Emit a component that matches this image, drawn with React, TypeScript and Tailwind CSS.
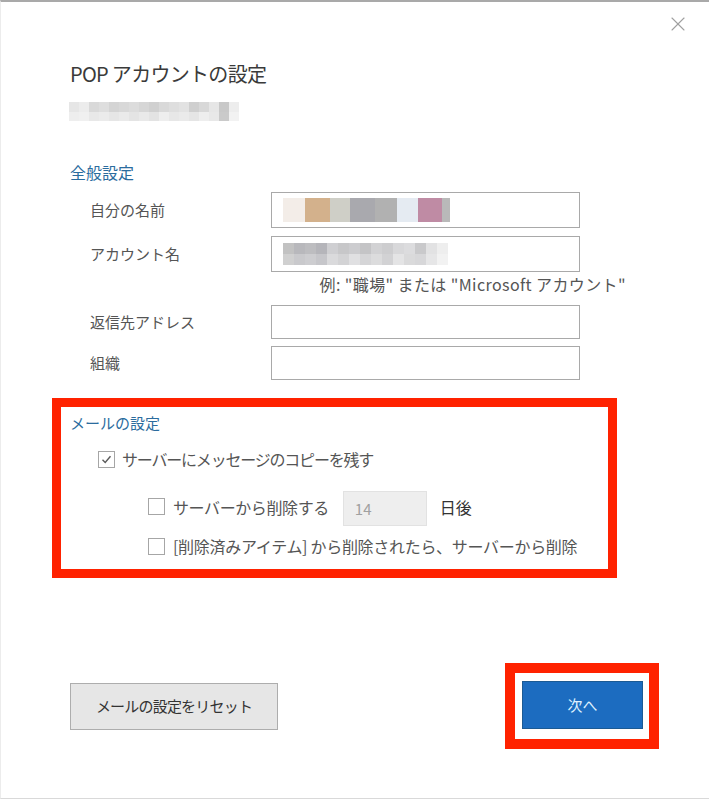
import { X } from 'lucide-react';

const emailTop = ['#e6e6e6', '#ececec', '#d9d9d9', '#dedede', '#d4d4d4', '#d8d8d8', '#dcdcdc', '#d6d6d6', '#d0d0d0', '#d9d9d9', '#dedede', '#e2e2e2', '#cfcfcf', '#d8d8d8', '#e6e6e6', '#c8c8c8', '#ededed'];
const emailBottom = ['#eeeeee', '#f0f0f0', '#e8e8e8', '#ebebeb', '#e6e6e6', '#eaeaea', '#e4e4e4', '#e9e9e9', '#e3e3e3', '#eeeeee', '#e7e7e7', '#eaeaea', '#e5e5e5', '#eeeeee', '#e8e8e8', '#cacaca', '#f2f2f2'];

const nameBlur = [
  { w: 22, c: '#f3ede8' },
  { w: 25, c: '#d3b18c' },
  { w: 20, c: '#cfcfc7' },
  { w: 25, c: '#a9a9ae' },
  { w: 22, c: '#b1b1b1' },
  { w: 21, c: '#e5ebf2' },
  { w: 24, c: '#bf8ba4' },
  { w: 8, c: '#b9b9b9' },
];

const accTop = ['#c2c2c2', '#b8b8bc', '#bdbdc0', '#b5b5ba', '#cfcfd2', '#c7c7c9', '#cccccf', '#c4c4c6', '#d2d2d4', '#cdcdcf', '#d8d8da', '#dcdcde', '#c9c9cb', '#e2e2e3', '#eeeeee'];
const accBottom = ['#d0d0d0', '#c9c9cc', '#cdcdd0', '#c6c6ca', '#dadadc', '#d3d3d5', '#e0e0e2', '#d5d5d7', '#dcdcdd', '#d2d2d4', '#e4e4e5', '#dadadb', '#d7d7d9', '#e6e6e7', '#f2f2f2'];

function Checkbox({ checked }: { checked?: boolean }) {
  return (
    <span className="w-[17px] h-[17px] border border-[#a6a6a6] bg-white flex items-center justify-center shrink-0">
      {checked && (
        <svg width="13" height="13" viewBox="0 0 13 13">
          <path d="M2.5 6.8 L5.2 9.5 L10.5 3.2" fill="none" stroke="#5a5a5a" strokeWidth="1.4" />
        </svg>
      )}
    </span>
  );
}

function FieldRow({ label, h, children }: { label: string; h: string; children?: React.ReactNode }) {
  return (
    <div className="flex items-center">
      <div className="w-[219px] pl-[38px] text-[15px] leading-[24px] text-[#555555]">{label}</div>
      <div className={`w-[309px] ${h} border border-[#a9a9a9] bg-white flex items-center pl-[11px]`}>{children}</div>
    </div>
  );
}

export default function App() {
  return (
    <div
      className="w-[709px] h-[799px] bg-white border-t-2 border-t-[#a9a9a9] border-b border-b-[#d9d9d9] border-l border-l-[#ececec] flex flex-col"
      style={{ fontFamily: '"Noto Sans CJK JP", "Noto Sans", sans-serif' }}
    >
      <div className="flex justify-end pt-[10px] pr-[19px]">
        <X className="w-[24px] h-[24px] text-[#a0a0a0]" strokeWidth={1.1} />
      </div>

      <div className="pl-[51px] flex flex-col">
        <div className="ml-[18px] mt-[24px] text-[20px] leading-[28px] text-[#3a3a3a] tracking-[-0.7px]">POP アカウントの設定</div>

        <div className="ml-[17px] mt-[14px] flex flex-col">
          <div className="flex">
            {emailTop.map((c, i) => (
              <span key={i} className="w-[10px] h-[10px]" style={{ backgroundColor: c }} />
            ))}
          </div>
          <div className="flex">
            {emailBottom.map((c, i) => (
              <span key={i} className="w-[10px] h-[9px]" style={{ backgroundColor: c }} />
            ))}
          </div>
        </div>

        <div className="ml-[18px] mt-[39px] text-[16px] leading-[24px] text-[#2b6c9e]">全般設定</div>

        <div className="mt-[8px] flex flex-col">
          <FieldRow label="自分の名前" h="h-[36px]">
            <div className="flex h-[24px]">
              {nameBlur.map((b, i) => (
                <span key={i} className="h-full" style={{ width: b.w, backgroundColor: b.c }} />
              ))}
            </div>
          </FieldRow>
          <div className="mt-[8px]">
            <FieldRow label="アカウント名" h="h-[36px]">
              <div className="flex flex-col">
                <div className="flex">
                  {accTop.map((c, i) => (
                    <span key={i} className="w-[11px] h-[11px]" style={{ backgroundColor: c }} />
                  ))}
                </div>
                <div className="flex">
                  {accBottom.map((c, i) => (
                    <span key={i} className="w-[11px] h-[11px]" style={{ backgroundColor: c }} />
                  ))}
                </div>
              </div>
            </FieldRow>
          </div>
          <div className="w-[574px] text-right text-[16px] leading-[24px] text-[#555555] tracking-[0.4px]">例: "職場" または "Microsoft アカウント"</div>
          <div className="mt-[9px]">
            <FieldRow label="返信先アドレス" h="h-[34px]" />
          </div>
          <div className="mt-[7px]">
            <FieldRow label="組織" h="h-[34px]" />
          </div>
        </div>

        <div className="mt-[18px] w-[565px] h-[180px] border-[9px] border-[#ff2200] flex flex-col">
          <div className="pl-[9px] pt-[4px] text-[15px] leading-[24px] text-[#2b6c9e]">メールの設定</div>
          <div className="mt-[12px] pl-[37px] flex items-center gap-[7px] text-[16px] leading-[24px] text-[#555555]">
            <Checkbox checked />
            <span className="tracking-[-1.2px]">サーバーにメッセージのコピーを残す</span>
          </div>
          <div className="mt-[16px] pl-[87px] flex items-center text-[16px] leading-[24px] text-[#555555]">
            <Checkbox />
            <span className="ml-[8px] tracking-[-0.4px]">サーバーから削除する</span>
            <div className="ml-[14px] mt-[4px] w-[84px] h-[35px] bg-[#eeeeee] border border-[#e2e2e2] flex items-center pl-[11px] text-[15px] text-[#a0a0a0]">14</div>
            <span className="ml-[13px] text-[#333333]">日後</span>
          </div>
          <div className="mt-[8px] pl-[87px] flex items-center gap-[8px] text-[16px] leading-[24px] text-[#555555]">
            <Checkbox />
            <span className="tracking-[-0.3px]">[削除済みアイテム] から削除されたら、サーバーから削除</span>
          </div>
        </div>

        <div className="mt-[85px] flex items-center justify-between pr-[50px]">
          <button className="ml-[18px] w-[208px] h-[47px] bg-[#e6e6e6] border border-[#adadad] text-[15px] text-[#333333] tracking-[-0.8px]">
            メールの設定をリセット
          </button>
          <div className="w-[154px] h-[86px] border-[10px] border-[#ff2200] flex items-start justify-center pt-[8px] pl-[1px]">
            <button className="w-[121px] h-[48px] bg-[#1c6cc0] border border-[#1b5a94] text-[15px] text-[#dff1ff]">次へ</button>
          </div>
        </div>
      </div>
    </div>
  );
}
